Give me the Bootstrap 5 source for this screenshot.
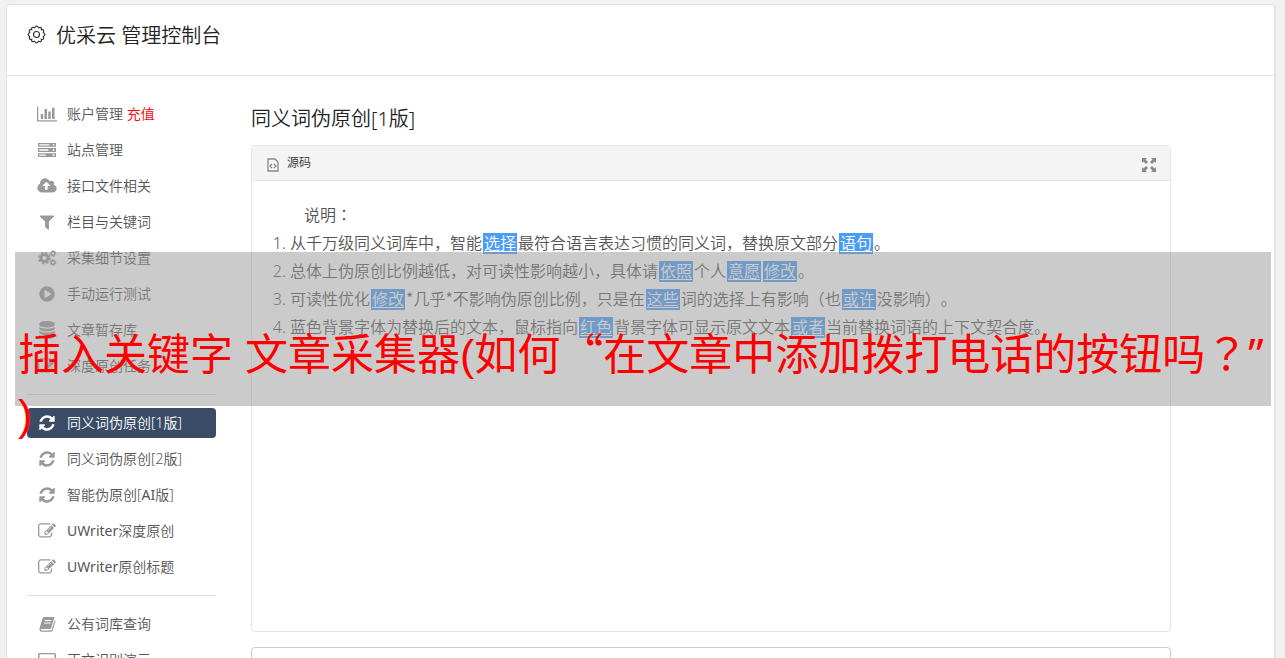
<!DOCTYPE html>
<html lang="zh-CN">
<head>
<meta charset="utf-8">
<meta name="viewport" content="width=device-width, initial-scale=1">
<title>优采云 管理控制台</title>
<link href="https://cdn.jsdelivr.net/npm/bootstrap@5.3.0/dist/css/bootstrap.min.css" rel="stylesheet">
<style>
  body { background: #f1f1f1; font-family: "Noto Sans", "Noto Sans CJK SC", sans-serif; font-weight: 350; font-size: 14px; color: #555; text-spacing-trim: space-all; }
  .page-shell { height: 100vh; overflow: hidden; padding: 4px 9px 0 6px; }
  .panel { background: #fff; border: 1px solid #e3e3e3; border-right-width: 2px; border-radius: 4px; min-height: 100vh; }
  .panel-head { height: 71px; padding: 16px 20px; border-bottom: 1px solid #e5e5e5; color: #333; }
  .panel-head h1, .main-col h2 { font-size: 20px; line-height: 30px; font-weight: 350; color: #222; margin: 0; }
  .side-col { flex: 0 0 189px; padding-top: 20px; }
  .side-col .nav-link { height: 30px; margin: 3px 0; padding: 0 10px; gap: 10px; border-radius: 4px; color: #555; line-height: 30px; white-space: nowrap; }
  .side-col .nav-link svg { width: 20px; height: 18px; fill: #999; flex: none; }
  .side-col .nav-link.active { background: #3a4b66; color: #fff; }
  .side-col .nav-link.active svg { fill: #fff; }
  .side-col hr { margin: 10px 0; opacity: 1; border-top-color: #ddd; }
  .pay-mark { color: red; }
  .main-col { margin: 28px 103px 0 35px; }
  .editor { border: 1px solid #e5e5e5; border-radius: 4px; margin-top: 11px; }
  .editor-bar { height: 35px; background: #f4f4f4; border-bottom: 1px solid #e5e5e5; padding: 0 14px 0 15px; border-radius: 3px 3px 0 0; }
  .editor-bar button { border: 0; background: none; padding: 0; font-size: 12px; font-weight: inherit; color: #333; }
  .editor-body { min-height: 450px; padding: 20px; font-size: 16px; line-height: 28px; color: #555; }
  .editor-body p { text-indent: 2em; margin: 0; }
  .editor-body ol { margin: 0; padding-left: 18px; }
  .editor-body a { background: #4a9df6; color: #fff; padding: 0 1px; margin: 0 1px; display: inline-block; line-height: 21px; text-decoration: underline; text-underline-offset: 2px; }
  .result-box { height: 120px; margin-top: 15px; border: 1px solid #ccc; border-radius: 4px; resize: none; }
  .caption-band { position: absolute; left: 15px; right: 14px; top: 252px; height: 154px; background: rgba(151,151,151,.5); color: red; font-family: "Liberation Sans", "Noto Sans CJK SC", sans-serif; font-size: 43px; line-height: 60px; font-weight: 400; padding: 73px 3px 0; white-space: nowrap; }
  .face-sc { font-family: "Noto Sans CJK SC", sans-serif; line-height: 1; }
  .face-tc { font-family: "Noto Sans CJK TC", sans-serif; line-height: 1; }
  .face-ui { font-family: "Noto Sans", sans-serif; line-height: 1; }
</style>
</head>
<body>
<svg class="d-none">
  <symbol id="i-chart" viewBox="0 0 2048 1792"><path d="M640 896v512h-256v-512h256zm384-512v1024h-256v-1024h256zm1024 1152v128h-2048v-1536h128v1408h1920zm-640-896v768h-256v-768h256zm384-384v1152h-256v-1152h256z"/></symbol>
  <symbol id="i-server" viewBox="0 0 1792 1792"><path fill-rule="evenodd" d="M0 192h1792v384H0zM128 320v128h1024V320zM1472 300v160h160V300zM0 704h1792v384H0zM128 832v128h896V832zM1472 812v160h160V812zM0 1216h1792v384H0zM128 1344v128h640v-128zM1472 1324v160h160v-160z"/></symbol>
  <symbol id="i-cloud" viewBox="0 0 1920 1792"><path d="M1280 864q0-14-9-23l-352-352q-9-9-23-9t-23 9l-351 351q-10 12-10 24 0 14 9 23t23 9h224v352q0 13 9.5 22.5t22.5 9.5h192q13 0 22.5-9.5t9.5-22.5v-352h224q13 0 22.5-9.5t9.5-22.5zm640 288q0 159-112.5 271.5t-271.5 112.5h-1088q-185 0-316.5-131.5t-131.5-316.5q0-130 70-240t188-165q-2-30-2-43 0-212 150-362t362-150q156 0 285.5 87t188.5 231q71-62 166-62 106 0 181 75t75 181q0 76-41 138 130 31 213.5 135.5t83.5 238.5z"/></symbol>
  <symbol id="i-filter" viewBox="0 0 1792 1792"><path d="M1595 295q17 41-14 70l-493 493v742q0 42-39 59-13 5-25 5-27 0-45-19l-256-256q-19-19-19-45v-486l-493-493q-31-29-14-70 17-39 59-39h1280q42 0 59 39z"/></symbol>
  <symbol id="i-cogs" viewBox="0 0 20 18"><g fill="none" stroke="#999"><circle cx="7.500" cy="9" r="3.600" stroke-width="3"/><circle cx="7.500" cy="9" r="5.600" stroke-width="1.600" stroke-dasharray="2.200 2.198"/><circle cx="16" cy="4.500" r="1.900" stroke-width="1.500"/><circle cx="16" cy="4.500" r="2.900" stroke-width="1" stroke-dasharray="1.500 1.537"/><circle cx="16" cy="13.500" r="1.900" stroke-width="1.500"/><circle cx="16" cy="13.500" r="2.900" stroke-width="1" stroke-dasharray="1.500 1.537"/></g></symbol>
  <symbol id="i-play" viewBox="0 0 1792 1792"><path d="M896 128q209 0 385.500 103t279.500 279.500 103 385.500-103 385.500-279.500 279.500-385.500 103-385.500-103-279.500-279.500-103-385.500 103-385.500 279.500-279.500 385.500-103zm384 823q32-18 32-55t-32-55l-544-320q-31-19-64-1-32 19-32 56v640q0 37 32 56 16 8 32 8 17 0 32-9z"/></symbol>
  <symbol id="i-db" viewBox="0 0 1792 1792"><path d="M896 768q237 0 443-43t325-127v170q0 69-103 128t-280 93.500-385 34.500-385-34.500-280-93.500-103-128v-170q119 84 325 127t443 43zm0 768q237 0 443-43t325-127v170q0 69-103 128t-280 93.500-385 34.500-385-34.500-280-93.500-103-128v-170q119 84 325 127t443 43zm0-384q237 0 443-43t325-127v170q0 69-103 128t-280 93.500-385 34.500-385-34.500-280-93.500-103-128v-170q119 84 325 127t443 43zm0-1152q208 0 385 34.500t280 93.500 103 128v128q0 69-103 128t-280 93.500-385 34.500-385-34.500-280-93.500-103-128v-128q0-69 103-128t280-93.500 385-34.500z"/></symbol>
  <symbol id="i-edit" viewBox="0 0 1792 1792"><path d="M888 1184l116-116-152-152-116 116v56h96v96h56zm440-720q-16-16-33 1l-350 350q-17 17-1 33t33-1l350-350q17-17 1-33zm80 594v190q0 119-84.500 203.500t-203.500 84.500h-832q-119 0-203.500-84.500t-84.500-203.500v-832q0-119 84.500-203.500t203.500-84.500h832q63 0 117 25 15 7 18 23 3 17-9 29l-49 49q-14 14-32 8-23-6-45-6h-832q-66 0-113 47t-47 113v832q0 66 47 113t113 47h832q66 0 113-47t47-113v-126q0-13 9-22l64-64q15-15 35-7t20 29zm-96-738l288 288-672 672h-288v-288zm444 132l-92 92-288-288 92-92q28-28 68-28t68 28l152 152q28 28 28 68t-28 68z"/></symbol>
  <symbol id="i-sync" viewBox="0 0 1792 1792"><path d="M1639 1056q0 5-1 7-64 268-268 434.500t-478 166.500q-146 0-282.500-55t-243.500-157l-129 129q-19 19-45 19t-45-19-19-45v-448q0-26 19-45t45-19h448q26 0 45 19t19 45-19 45l-137 137q71 66 161 102t187 36q134 0 250-65t186-179q11-17 53-117 8-23 30-23h192q13 0 22.500 9.500t9.500 22.500zm25-800v448q0 26-19 45t-45 19h-448q-26 0-45-19t-19-45 19-45l138-138q-148-137-349-137-134 0-250 65t-186 179q-11 17-53 117-8 23-30 23h-199q-13 0-22.500-9.500t-9.500-22.500v-7q65-268 270-434.500t480-166.500q146 0 284 55.500t245 156.500l130-129q19-19 45-19t45 19 19 45z"/></symbol>
  <symbol id="i-book" viewBox="0 0 18 18"><path fill-rule="evenodd" d="M6.300 2h9.200q1 0 .7 1l-3 10q-.3 1-1.300 1H4q-1.400 0-1.200.8.200.7 1.200.7h8.700q.8 0 1-.8l3-9.700q1 .5.700 1.500l-2.700 9q-.4 1.300-1.700 1.300H4q-2.500 0-2.700-2.500L4.500 3.300Q5 2 6.300 2zM7 5l-.3 1h6.500l.3-1zM6.300 7.500l-.3 1h6.500l.3-1z"/></symbol>
  <symbol id="i-screen" viewBox="0 0 20 18"><path fill-rule="evenodd" d="M2.500 2h15q1.500 0 1.500 1.500v10q0 1.500-1.500 1.500h-15Q1 15 1 13.500v-10Q1 2 2.500 2zm0 1.200v9h15v-9zM7 16h6v1H7z"/></symbol>
</svg>

<div class="page-shell">
  <div class="panel">
    <header class="panel-head d-flex align-items-start">
      <svg class="flex-shrink-0 me-2" width="21" height="28" viewBox="0 0 21 28" fill="none" stroke="#333" stroke-width="1.200"><circle cx="9.500" cy="13.500" r="3"/><path d="M7.500 6.700Q9.500 3.500 11.500 6.700Q15 5.300 14.300 8.700Q17.700 8 16.300 11.500Q19.500 13.500 16.300 15.500Q17.700 19 14.300 18.300Q15 21.700 11.500 20.300Q9.500 23.500 7.500 20.300Q4 21.700 4.700 18.300Q1.300 19 2.700 15.500Q-.5 13.500 2.700 11.500Q1.300 8 4.700 8.700Q4 5.300 7.500 6.700z"/></svg>
      <h1>优采云 管理控制台</h1>
    </header>
    <div class="d-flex px-0 ps-3 ms-1">
      <nav class="side-col nav flex-column flex-nowrap">
        <a class="nav-link d-flex align-items-center" href="#"><svg><use href="#i-chart"/></svg><span>账户管理 <span class="pay-mark">充值</span></span></a>
        <a class="nav-link d-flex align-items-center" href="#"><svg><use href="#i-server"/></svg>站点管理</a>
        <a class="nav-link d-flex align-items-center" href="#"><svg><use href="#i-cloud"/></svg>接口文件相关</a>
        <a class="nav-link d-flex align-items-center" href="#"><svg><use href="#i-filter"/></svg>栏目与关键词</a>
        <a class="nav-link d-flex align-items-center" href="#"><svg><use href="#i-cogs"/></svg>采集细节设置</a>
        <a class="nav-link d-flex align-items-center" href="#"><svg><use href="#i-play"/></svg>手动运行测试</a>
        <a class="nav-link d-flex align-items-center" href="#"><svg><use href="#i-db"/></svg>文章暂存库</a>
        <a class="nav-link d-flex align-items-center" href="#"><svg><use href="#i-edit"/></svg>深度原创任务</a>
        <hr>
        <a class="nav-link active d-flex align-items-center" href="#" aria-current="page"><svg><use href="#i-sync"/></svg>同义词伪原创[1版]</a>
        <a class="nav-link d-flex align-items-center" href="#"><svg><use href="#i-sync"/></svg>同义词伪原创[2版]</a>
        <a class="nav-link d-flex align-items-center" href="#"><svg><use href="#i-sync"/></svg><span>智能伪原创[<span class="fw-normal">AI</span>版]</span></a>
        <a class="nav-link d-flex align-items-center" href="#"><svg><use href="#i-edit"/></svg><span><span class="fw-normal">UWriter</span>深度原创</span></a>
        <a class="nav-link d-flex align-items-center" href="#"><svg><use href="#i-edit"/></svg><span><span class="fw-normal">UWriter</span>原创标题</span></a>
        <hr>
        <a class="nav-link d-flex align-items-center" href="#"><svg><use href="#i-book"/></svg>公有词库查询</a>
        <a class="nav-link d-flex align-items-center" href="#"><svg><use href="#i-screen"/></svg>正文识别演示</a>
      </nav>
      <main class="main-col flex-grow-1">
        <h2>同义词伪原创[1版]</h2>
        <section class="editor">
          <div class="editor-bar d-flex align-items-center justify-content-between">
            <button type="button" class="d-flex align-items-center gap-2"><svg class="mt-1" width="12" height="14" viewBox="0 0 12 14" fill="none" stroke="#888" stroke-width="1.300"><path d="M1 1h7l3 3v9H1zM5 6L3 8l2 2M7 6l2 2-2 2"/></svg>源码</button>
            <button type="button" aria-label="全屏"><svg class="d-block mt-1" width="14" height="14" viewBox="0 0 14 14" fill="#888"><path d="M0 0h5L3.500 1.500 6 4 4 6 1.500 3.500 0 5zM14 0H9l1.500 1.500L8 4l2 2 2.500-2.500L14 5zM0 14h5l-1.500-1.500L6 10 4 8l-2.500 2.500L0 9zM14 14H9l1.500-1.500L8 10l2-2 2.500 2.500L14 9z"/></svg></button>
          </div>
          <div class="editor-body">
            <p>说明<span class="face-tc" lang="zh-TW">：</span></p>
            <ol>
              <li>从千万级同义词库中，智能<a href="#">选择</a>最符合语言表达习惯的同义词，替换原文部分<a href="#">语句</a>。</li>
              <li>总体上伪原创比例越低，对可读性影响越小，具体请<a href="#">依照</a>个人<a href="#">意愿</a><a href="#">修改</a>。</li>
              <li>可读性优化<a href="#">修改</a><span class="face-sc">*几乎*</span>不影响伪原创比例，只是在<a href="#">这些</a>词的选择上有影响（也<a href="#">或许</a>没影响）。</li>
              <li>蓝色背景字体为替换后的文本，鼠标指向<a href="#">红色</a>背景字体可显示原文文本<a href="#">或者</a>当前替换词语的上下文契合度。</li>
            </ol>
          </div>
        </section>
        <textarea class="result-box d-block w-100" aria-label="结果"></textarea>
      </main>
    </div>
  </div>
</div>
<div class="caption-band">插入关键字 文章采集器(如何<span class="face-sc">“</span>在文章中添加拨打电话的按钮吗<span class="face-tc" lang="zh-TW">？</span><span class="face-ui">”</span><br>)</div>
<script src="https://cdn.jsdelivr.net/npm/bootstrap@5.3.0/dist/js/bootstrap.bundle.min.js"></script>
</body>
</html>
